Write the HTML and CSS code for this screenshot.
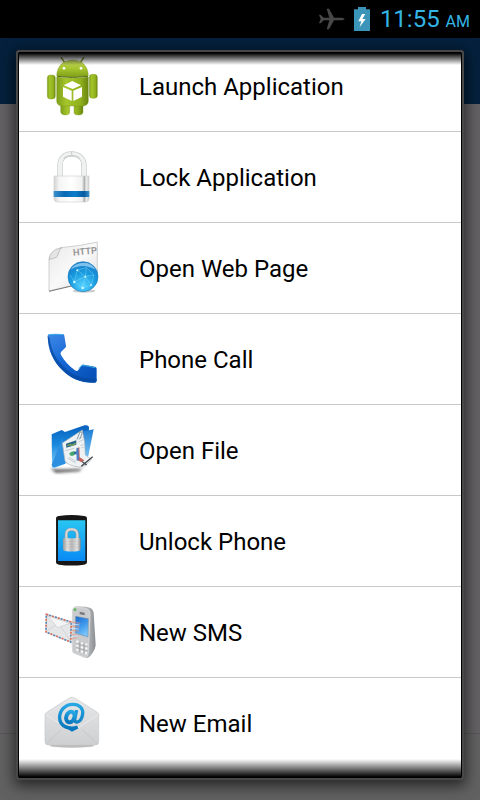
FILE: index.html
```html
<!DOCTYPE html>
<html lang="en">
<head>
<meta charset="utf-8">
<meta name="viewport" content="width=device-width, initial-scale=1">
<title>Choose action</title>
<link rel="stylesheet" href="styles.css">
</head>
<body>
<header class="status">
  <svg class="plane" viewBox="0 0 78 66" aria-hidden="true"><path d="M77 33c-2-3-8-4-14-4H45L30 2h-7l8 27H14L5 20H0l5 13-5 13h5l9-9h17l-8 27h7l15-27h18c6 0 12-1 14-4z" fill="#484848"/></svg>
  <svg class="battery" viewBox="0 0 48 72" aria-hidden="true"><path d="M12 0h24v7h12v65H0V7h12z" fill="#3a95b8"/><path d="M24 21L13 43h9l-5 17 18-24h-10l9-15z" fill="#fff"/></svg>
  <div class="clock">11:55 <span class="ampm">AM</span></div>
</header>
<div class="appbar"></div>
<main class="page"></main>
<footer class="footer"></footer>

<div class="dialog" role="dialog" aria-label="Choose action">
  <ul class="list">
    <li><button class="row">
      <svg class="icon" viewBox="105 48 240 240" aria-hidden="true">
        <defs>
          <linearGradient id="droid"><stop offset="0" stop-color="#7d9e19"/><stop offset=".3" stop-color="#a5c52b"/><stop offset=".75" stop-color="#91b11d"/><stop offset="1" stop-color="#69850f"/></linearGradient>
          <linearGradient id="droidHead" x2="0" y2="1"><stop offset="0" stop-color="#c0d265"/><stop offset=".5" stop-color="#a6c52e"/><stop offset="1" stop-color="#819f18"/></linearGradient>
        </defs>
        <g stroke="#738f15" stroke-width="1">
          <path d="M184 83l10 15M251 83l-10 15" stroke-width="4" stroke-linecap="round"/>
          <path d="M170 137c1-28 19-47 48-47s46 19 47 47q-47 8-95 0z" fill="url(#droidHead)"/>
          <rect x="142" y="135" width="24" height="72" rx="9" fill="url(#droid)"/>
          <rect x="268" y="133" width="24" height="72" rx="9" fill="url(#droid)"/>
          <path d="M182 220h27v26q0 9-13 9t-14-9zM222 220h27v26q0 9-14 9t-13-9z" fill="url(#droid)"/>
          <path d="M170 141q47 7 95 0v73q-1 13-15 14h-65q-14-1-15-14z" fill="url(#droid)"/>
        </g>
        <path d="M171 139q46 7 93 0" fill="none" stroke="#566d10" stroke-width="3"/>
        <circle cx="192" cy="115" r="4" fill="#fff"/><circle cx="243" cy="115" r="4" fill="#fff"/>
        <path d="M217 153l26 13-25 11-27-11zM189 171l26 11v31l-26-13zM246 171l-26 11v31l26-13z" fill="#fff"/>
      </svg>
      <span class="label">Launch Application</span></button></li>
    <li><button class="row">
      <svg class="icon" viewBox="0 -9 240 240" aria-hidden="true">
        <defs>
          <linearGradient id="lockBody"><stop offset="0" stop-color="#d2d2d2"/><stop offset=".15" stop-color="#f5f5f5"/><stop offset=".5" stop-color="#fff"/><stop offset=".8" stop-color="#f1f1f1"/><stop offset=".87" stop-color="#aeb0b2"/><stop offset=".92" stop-color="#eee"/><stop offset="1" stop-color="#ccc"/></linearGradient>
          <linearGradient id="lockBand"><stop offset="0" stop-color="#3a91cc"/><stop offset=".3" stop-color="#0869b4"/><stop offset=".6" stop-color="#0d7ecb"/><stop offset=".85" stop-color="#075b9f"/><stop offset="1" stop-color="#3990ca"/></linearGradient>
        </defs>
        <path d="M75 112V76c0-22 14-34 35-34s37 12 37 34v36" fill="none" stroke="#c7c9ca" stroke-width="16"/>
        <path d="M75 112V76c0-22 14-34 35-34s37 12 37 34v36" fill="none" stroke="#f0f1f1" stroke-width="12"/>
        <path d="M86 54q24-16 48 0M110 36v9" fill="none" stroke="#b5b8ba" stroke-width="2"/>
        <path d="M57 108h105v68q0 10-12 10H69q-12 0-12-10z" fill="url(#lockBody)" stroke="#d2d2d2" stroke-width="2"/>
        <path d="M56 153h107v18H56z" fill="url(#lockBand)"/>
      </svg>
      <span class="label">Lock Application</span></button></li>
    <li><button class="row">
      <svg class="icon" viewBox="0 -6 240 240" aria-hidden="true">
        <defs>
          <linearGradient id="paper" x2="1" y2="1"><stop offset="0" stop-color="#e8e8e8"/><stop offset=".5" stop-color="#f9f9f9"/><stop offset="1" stop-color="#ddd"/></linearGradient>
          <radialGradient id="globe" cx=".5" cy=".8" r=".8"><stop offset="0" stop-color="#55d3ff"/><stop offset=".55" stop-color="#189bdf"/><stop offset="1" stop-color="#1678c6"/></radialGradient>
        </defs>
        <path d="M42 88L76 53q54-4 111-17v113L42 183z" fill="url(#paper)" stroke="#bbb" stroke-width="2"/>
        <path d="M42 184l80-19" stroke="#777" stroke-width="3"/>
        <path d="M42 88q22-4 25-9 4-18 13-26-21 3-30 15-7 8-8 20z" fill="#e4e4e4" stroke="#aaa" stroke-width="2"/>
        <text class="http" x="115" y="77" transform="rotate(-5 115 77)">HTTP</text>
        <ellipse cx="147" cy="183" rx="34" ry="5" fill="#999" opacity=".5"/>
        <circle cx="144" cy="140" r="45" fill="url(#globe)" stroke="#2482bf" stroke-width="2"/>
        <path d="M107 119q35-22 74 0-9-20-34-21-28 0-40 21z" fill="#a9ddfa" opacity=".7"/>
        <path d="M118 155l9-35 27-7 23 22-9 31-26 8-24-19 33-15 3-27M127 120l24 20 26-5M151 140l17 26M142 174l9-34M118 155l-13-20" fill="none" stroke="#91e1ff" stroke-width="2" opacity=".6"/>
        <g fill="#caf5ff"><circle cx="127" cy="121" r="3"/><circle cx="151" cy="140" r="3"/><circle cx="118" cy="156" r="4"/><circle cx="143" cy="174" r="4"/><circle cx="168" cy="165" r="3"/></g>
      </svg>
      <span class="label">Open Web Page</span></button></li>
    <li><button class="row">
      <svg class="icon" viewBox="0 -9 240 240" aria-hidden="true">
        <defs><linearGradient id="call" x2=".7" y2="1"><stop offset="0" stop-color="#3f88e6"/><stop offset=".5" stop-color="#1769d6"/><stop offset="1" stop-color="#0752b9"/></linearGradient></defs>
        <path d="M38 41q1-5 6-5h39q5 0 5 5l5 30q1 4-3 7l-12 12q-3 4 0 9 15 27 42 46 6 4 10-1l9-13q3-4 8-3l33 6q5 1 5 6v36q0 6-7 6c-41 1-70-12-96-38S39 88 38 41z" fill="url(#call)"/>
        <path d="M38 42c2 45 18 77 44 103s55 37 96 37q7 0 7-6v-6c-42 2-72-9-98-35-25-25-39-50-43-87z" fill="#0549a2" opacity=".75"/>
        <path d="M41 38q21-3 43 0M131 139l10-9q20 2 40 7" fill="none" stroke="#42c1ef" stroke-width="3" opacity=".8"/>
      </svg>
      <span class="label">Phone Call</span></button></li>
    <li><button class="row">
      <svg class="icon" viewBox="0 -6 240 240" aria-hidden="true">
        <defs>
          <linearGradient id="folder" x2="0" y2="1"><stop offset="0" stop-color="#0760bd"/><stop offset=".45" stop-color="#1989dd"/><stop offset="1" stop-color="#8dd4fb"/></linearGradient>
          <linearGradient id="folderSide" x2="0" y2="1"><stop offset="0" stop-color="#1e7ed4"/><stop offset="1" stop-color="#7cc8f8"/></linearGradient>
          <filter id="soft"><feGaussianBlur stdDeviation="5"/></filter>
        </defs>
        <path d="M46 169l17 14 70-5 35-38-30 30-70 2z" fill="#222" opacity=".7" filter="url(#soft)"/>
        <path d="M50 67l30-13 10 6 59-20q11-2 13 5l-2 82-100 41q-9 3-9-7z" fill="url(#folder)"/>
        <path d="M146 58l30-6-16 79-14 12z" fill="url(#folderSide)"/>
        <path d="M50 158l32-79 10 60-2 16-32 11q-8-1-8-8z" fill="#2c8fdf"/>
        <path d="M82 93l60-39q9 36 9 75l18 13q-19 24-38 23-34-5-41-18z" fill="#eff2f4" stroke="#a6b1b8" stroke-width="2"/>
        <path d="M93 95l31-10v13l-30 9z" fill="#286488"/><path d="M97 101l9-3 6 2 10-6" fill="none" stroke="#85a952" stroke-width="4"/>
        <path d="M103 124q12-11 21-3-7 15-19 9z" fill="#48a66d"/><path d="M115 124l10-8v12z" fill="#2562ad"/>
        <path d="M127 108l6-2 1 30 14 9-8 6-14-7z" fill="#c4605a"/><path d="M124 109l6-2 2 36-7 3z" fill="#4b7ec4"/>
        <path d="M98 138l24 15M103 136l20 13M91 116l27-7M130 83l13-8M131 90l13-7M136 101l10-4M138 108l8-3" stroke="#aebbc2" stroke-width="2"/>
        <path d="M126 82l9-22q8-3 6 5l-7 16" fill="none" stroke="#8199a6" stroke-width="3"/>
        <path d="M139 163l34-29M142 149l13 10" stroke="#43494e" stroke-width="4"/>
      </svg>
      <span class="label">Open File</span></button></li>
    <li><button class="row">
      <svg class="icon" viewBox="0 -3 240 240" aria-hidden="true">
        <defs>
          <linearGradient id="screen" x2="0" y2="1"><stop offset="0" stop-color="#29c6f3"/><stop offset="1" stop-color="#078af4"/></linearGradient>
          <linearGradient id="silver"><stop offset="0" stop-color="#999"/><stop offset=".25" stop-color="#e0e0e0"/><stop offset=".5" stop-color="#b6b6b6"/><stop offset=".8" stop-color="#e2e2e2"/><stop offset="1" stop-color="#8b8b8b"/></linearGradient>
        </defs>
        <path d="M63 50q0-7 9-8 38-6 75 0 9 1 9 8v130q0 7-9 8-37 5-75 0-9-1-9-8z" fill="#161616"/>
        <path d="M65 51v126M154 51v126" fill="none" stroke="#444" stroke-width="1"/>
        <path d="M69 55h82v122H69z" fill="url(#screen)"/>
        <path d="M94 111V96q0-14 16-14t17 14v15" fill="none" stroke="#929ba0" stroke-width="10"/>
        <path d="M94 111V96q0-14 16-14t17 14v15" fill="none" stroke="#d7dadb" stroke-width="6"/>
        <path d="M84 109h53v33q0 4-4 4-23 5-45 0-4 0-4-4z" fill="url(#silver)"/>
        <path d="M86 119h49M86 127h49M86 135h49" stroke="#999" opacity=".5"/>
      </svg>
      <span class="label">Unlock Phone</span></button></li>
    <li><button class="row">
      <svg class="icon" viewBox="0 -6 240 240" aria-hidden="true">
        <defs>
          <linearGradient id="handset"><stop offset="0" stop-color="#c6c8c9"/><stop offset=".7" stop-color="#b2b5b7"/><stop offset="1" stop-color="#888c8f"/></linearGradient>
          <linearGradient id="display" x2=".4" y2="1"><stop offset="0" stop-color="#1769ce"/><stop offset=".6" stop-color="#429cee"/><stop offset="1" stop-color="#78c3f9"/></linearGradient>
        </defs>
        <path d="M111 50q2-11 13-13l29 1q21 2 23 18l6 98q-1 11-9 22-10 17-20 16l-36-14q-6-3-6-13z" fill="url(#handset)"/>
        <path d="M112 49q2-8 10-9l25 2q18 3 18 18l-5 116q-1 12-9 15l-34-13q-5-3-5-12z" fill="#c9cbcc" stroke="#dfe0e1" stroke-width="2"/>
        <path d="M122 67l38 7-1 55-38-12z" fill="url(#display)" stroke="#7993ac" stroke-width="2"/>
        <path d="M134 53l15 3v8l-15-3z" fill="#747b80"/><circle cx="120" cy="47" r="4" fill="#54b64b"/>
        <path d="M34 61l75 23-2 60-74-30z" fill="#e4e6e7" stroke="#d3d6d8" stroke-width="4"/>
        <path d="M34 61l75 23-2 60-74-30z" fill="none" stroke="#d86d58" stroke-width="5" stroke-dasharray="6 12"/>
        <path d="M34 61l75 23-2 60-74-30z" fill="none" stroke="#5884b3" stroke-width="5" stroke-dasharray="6 12" stroke-dashoffset="9"/>
        <path d="M39 66l28 35 38-13zM37 110l25-17M104 137L78 99" fill="#f5f5f5" stroke="#c7cacc" stroke-width="2"/>
        <path d="M109 84l27 4M109 96l25 3M109 109l23 2M108 122l23 1M108 135l17-4" stroke="#e59487" stroke-width="3" opacity=".8"/>
        <path d="M110 90l23 3M109 103l22 2M108 128l20-3" stroke="#cae3f5" stroke-width="3"/>
        <g stroke="#f8f8f8" stroke-width="7" stroke-linecap="round"><path d="M127 142v1M141 148v1M154 151v1M127 154v1M141 160v1M154 163v1M127 167v1M141 173v1M153 177v1"/></g>
        <path d="M134 145v29M147 149v30M124 149l33 8M124 161l33 9" stroke="#999fa3" stroke-width="2"/>
      </svg>
      <span class="label">New SMS</span></button></li>
    <li><button class="row">
      <svg class="icon" viewBox="0 -6 240 240" aria-hidden="true">
        <defs>
          <linearGradient id="envelope" x2="0" y2="1"><stop offset="0" stop-color="#e7e8e9"/><stop offset="1" stop-color="#cdcfd1"/></linearGradient>
          <linearGradient id="at" x2="0" y2="1"><stop offset="0" stop-color="#26a7e4"/><stop offset="1" stop-color="#0877bd"/></linearGradient>
        </defs>
        <ellipse cx="111" cy="182" rx="66" ry="6" fill="#777" opacity=".5"/>
        <path d="M30 90q0-5 5-8l68-43q8-5 16 0l68 43q4 3 4 8v80q0 10-10 10H40q-10 0-10-10z" fill="url(#envelope)" stroke="#c7c9cb" stroke-width="2"/>
        <path d="M31 90l80 49 79-49M35 175l47-43M186 175l-47-43" fill="none" stroke="#c0c2c4" stroke-width="2"/>
        <path d="M32 90l80 49 77-49" fill="none" stroke="#fff" stroke-width="2"/>
        <g fill="none" stroke="url(#at)" stroke-width="10">
          <path d="M128 126c-24 9-54-1-54-27-1-23 17-41 40-41 20 0 31 13 29 29-2 17-11 25-19 24-7-1-5-7-4-12l5-24"/>
          <ellipse cx="106" cy="96" rx="12" ry="16" transform="rotate(20 106 96)" stroke-width="12"/>
        </g>
        <path d="M88 125q20 9 41 2l-1 4-17 9z" fill="#0877bd"/>
      </svg>
      <span class="label">New Email</span></button></li>
  </ul>
</div>
</body>
</html>
```

FILE: styles.css
```css
* {
  box-sizing: border-box;
}

body {
  margin: 0;
  min-height: 100vh;
  display: flex;
  flex-direction: column;
  position: relative;
  background: #636163;
  font-family: Roboto, "Noto Sans", sans-serif;
}

.status {
  height: 38px;
  padding: 0 10px;
  background: #000;
  color: #33b5e5;
  display: flex;
  align-items: center;
  justify-content: flex-end;
}

.plane {
  width: 26px;
  height: 22px;
  margin-right: 9px;
}

.battery {
  width: 16px;
  height: 24px;
  margin-right: 10px;
}

.clock {
  padding-top: 2px;
  font-size: 24px;
  line-height: 36px;
  white-space: nowrap;
}

.ampm {
  font-size: 16px;
}

.appbar {
  height: 66px;
  background: #04203c;
}

.page {
  flex: 1;
}

.footer {
  height: 67px;
  background: #616161;
  border-top: 1px solid #565656;
}

.dialog {
  position: absolute;
  inset: 50px 16px 20px;
  overflow: hidden;
  background: #fff;
  border: 2px solid #484848;
  border-radius: 3px;
  box-shadow: 0 4px 14px 2px rgba(0, 0, 0, 0.6);
}

.dialog::after {
  content: "";
  position: absolute;
  inset: 0;
  pointer-events: none;
  border: 1px solid #000;
  background:
    linear-gradient(#000, rgba(0, 0, 0, 0)) top / 100% 12px no-repeat,
    linear-gradient(rgba(0, 0, 0, 0), #000) bottom / 100% 18px no-repeat;
}

.list {
  list-style: none;
  margin: -11px 0 0;
  padding: 0 1px;
}

.list li + li {
  border-top: 1px solid #c8c8c8;
}

.row {
  width: 100%;
  height: 90px;
  padding: 0 16px;
  border: 0;
  background: none;
  display: flex;
  align-items: center;
  gap: 24px;
  font: inherit;
  font-size: 24px;
  line-height: 32px;
  color: #000;
  text-align: left;
}

.label {
  padding-top: 2px;
}

.icon {
  flex: none;
  width: 80px;
  height: 80px;
}

.http {
  font: bold 28px Roboto, sans-serif;
  fill: #999;
}
```
